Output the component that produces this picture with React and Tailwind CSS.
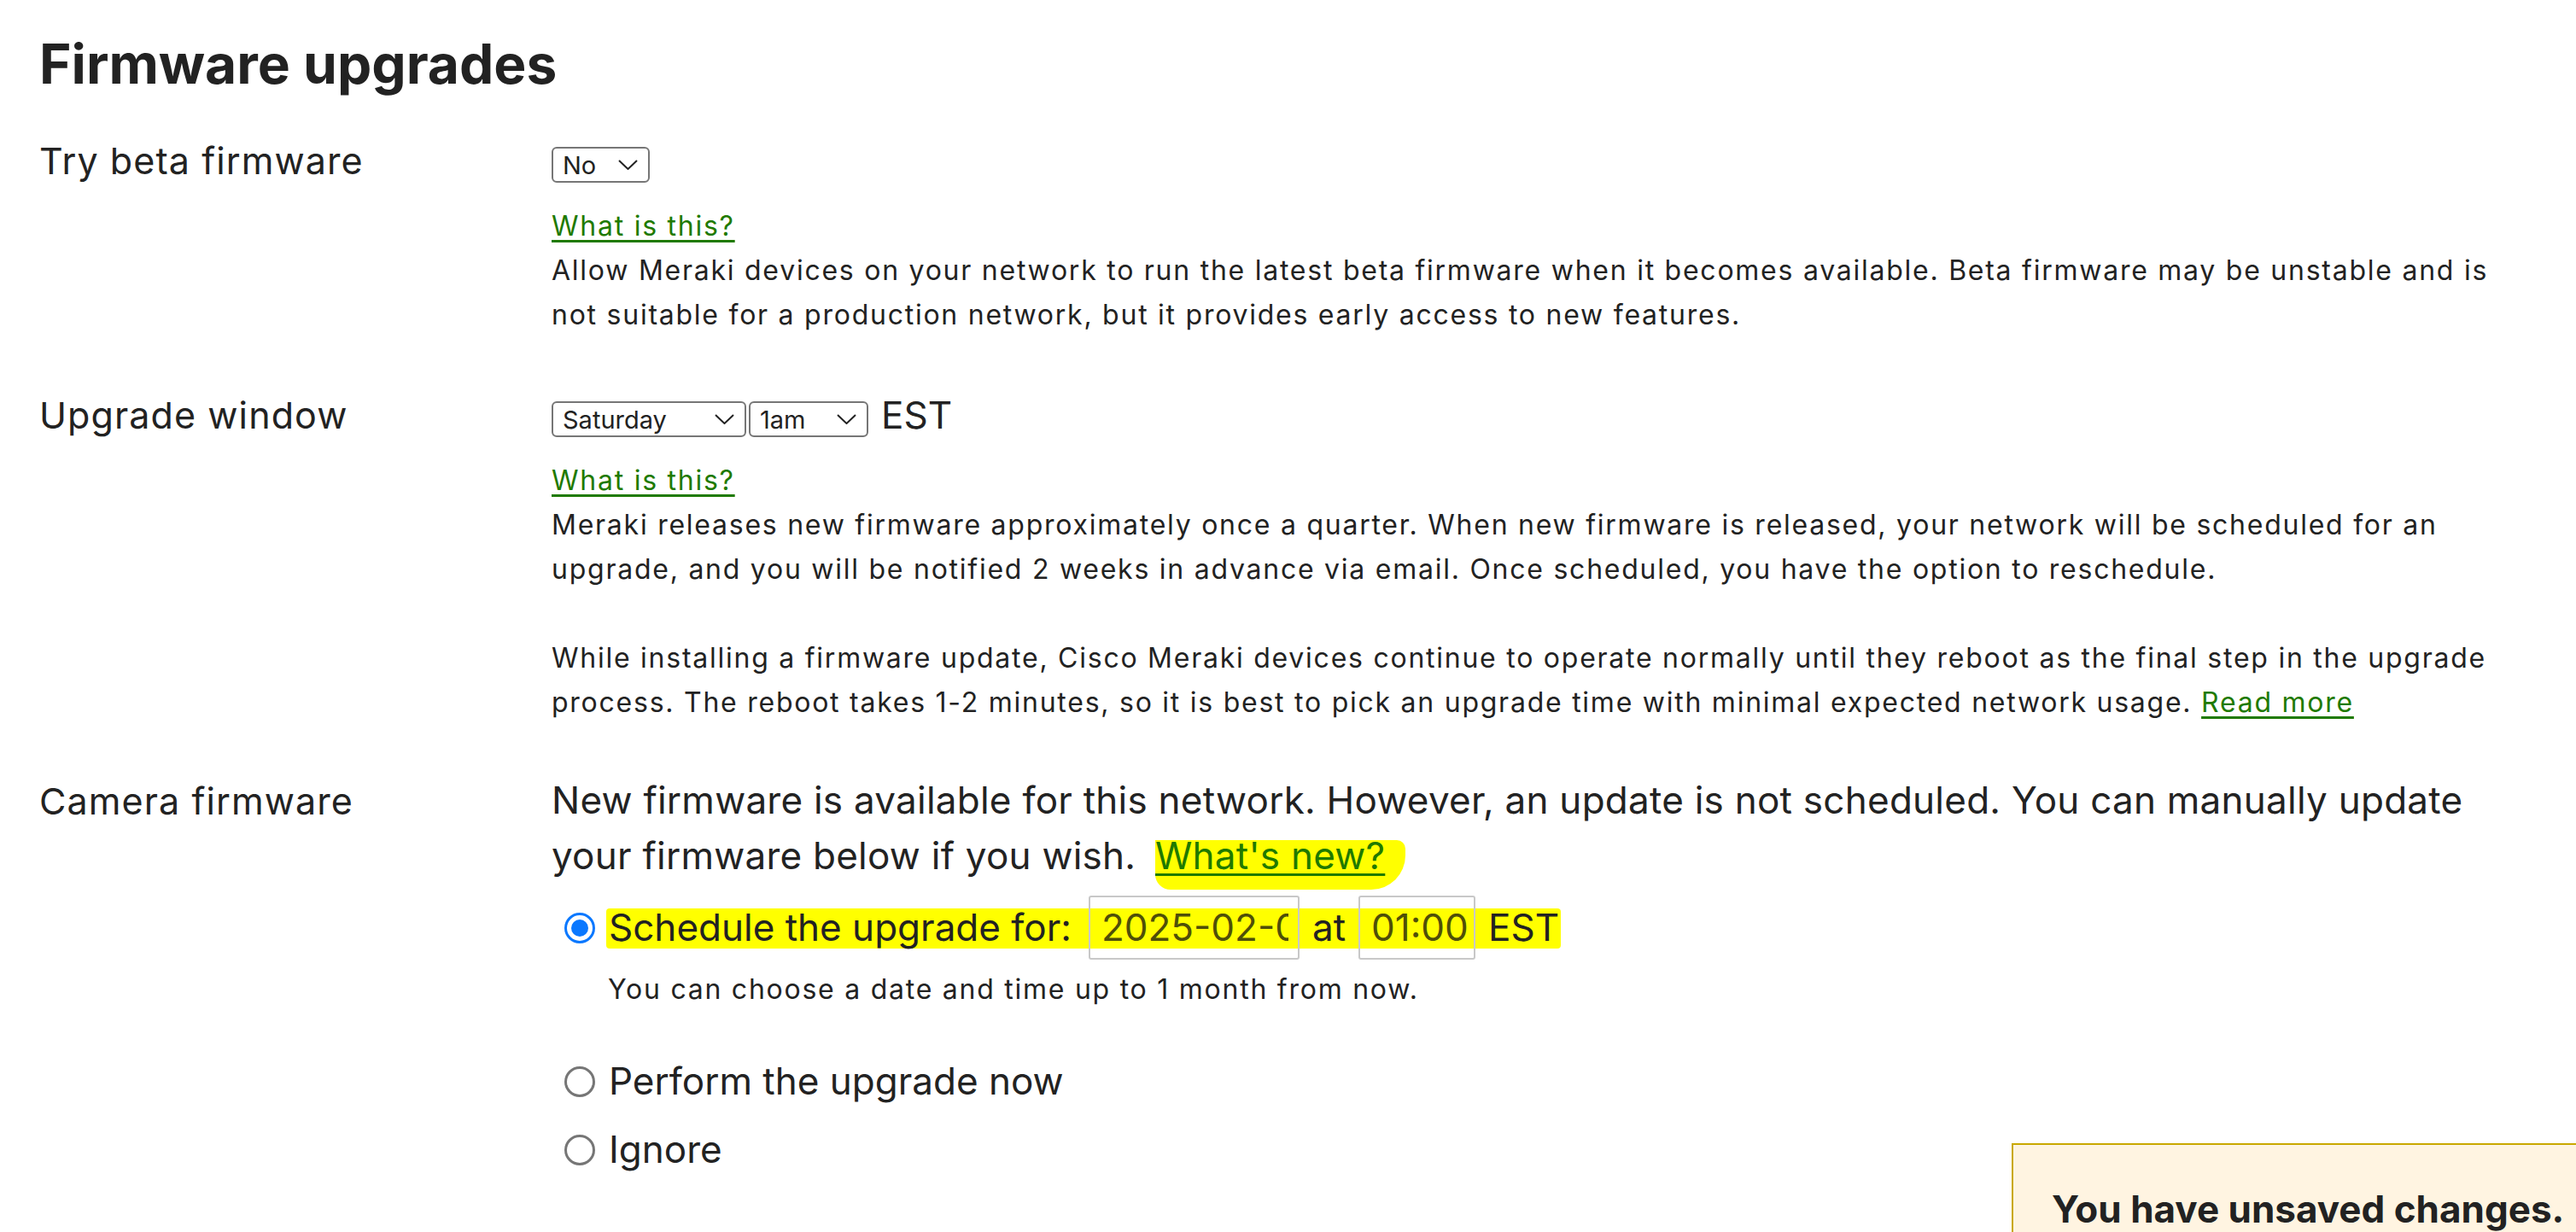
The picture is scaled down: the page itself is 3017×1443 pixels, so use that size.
const LINK =
  "text-[#1f7a00] underline decoration-[3px] underline-offset-[5px] decoration-[#1f7a00]";

function Chevron() {
  return (
    <svg width="23" height="12" viewBox="0 0 23 12" fill="none">
      <path d="M1 1 L11.5 11 L22 1" stroke="#222" strokeWidth="2" />
    </svg>
  );
}

function Select({ value, width }) {
  return (
    <div
      className={`flex h-[42px] items-center justify-between rounded-[6px] border-2 border-[#767676] bg-white pl-[11px] pr-[12px] text-[29px] leading-none ${width}`}
    >
      <span>{value}</span>
      <Chevron />
    </div>
  );
}

function Radio({ checked }) {
  if (checked) {
    return (
      <span className="flex h-[36px] w-[36px] shrink-0 items-center justify-center rounded-full border-[3px] border-[#0a78ff] bg-white">
        <span className="h-[20px] w-[20px] rounded-full bg-[#0a78ff]" />
      </span>
    );
  }
  return <span className="h-[36px] w-[36px] shrink-0 rounded-full border-[3px] border-[#767676] bg-white" />;
}

function Row({ label, labelClass = "", className = "", children }) {
  return (
    <div className={`grid grid-cols-[600px_1fr] ${className}`}>
      <div className={`text-[43px] leading-[32px] tracking-[1.1px] ${labelClass}`}>{label}</div>
      <div>{children}</div>
    </div>
  );
}

export default function App() {
  return (
    <div className="relative h-[1443px] overflow-hidden bg-white pl-[46px] pr-[67px] pt-[36px] font-['Inter',sans-serif] text-[#222]">
      <h1 className="text-[64px] font-bold leading-[78px]">Firmware upgrades</h1>

      {/* Try beta firmware */}
      <Row label="Try beta firmware" className="mt-[58px]">
        <Select value="No" width="w-[115px]" />
        <div className="mt-[25px] text-[32px] leading-[52px] tracking-[1.75px]">
          <a className={`block w-fit ${LINK}`}>What is this?</a>
          <p>
            Allow Meraki devices on your network to run the latest beta firmware when it becomes
            available. Beta firmware may be unstable and is not suitable for a production network,
            but it provides early access to new features.
          </p>
        </div>
      </Row>

      {/* Upgrade window */}
      <Row label="Upgrade window" className="mt-[75px]">
        <div className="flex items-start gap-[3px]">
          <Select value="Saturday" width="w-[228px]" />
          <Select value="1am" width="w-[140px]" />
          <span className="ml-[12px] text-[44px] leading-[32px]">EST</span>
        </div>
        <div className="mt-[25px] text-[32px] leading-[52px] tracking-[1.75px]">
          <a className={`block w-fit ${LINK}`}>What is this?</a>
          <p>
            Meraki releases new firmware approximately once a quarter. When new firmware is
            released, your network will be scheduled for an upgrade, and you will be notified 2
            weeks in advance via email. Once scheduled, you have the option to reschedule.
          </p>
          <p className="mt-[52px]">
            While installing a firmware update, Cisco Meraki devices continue to operate normally
            until they reboot as the final step in the upgrade process. The reboot takes 1-2
            minutes, so it is best to pick an upgrade time with minimal expected network usage.{" "}
            <a className={LINK}>Read more</a>
          </p>
        </div>
      </Row>

      {/* Camera firmware */}
      <Row label="Camera firmware" labelClass="mt-[17px]" className="mt-[56px]">
        <p className="text-[44px] leading-[65px] tracking-[0.25px]">
          New firmware is available for this network. However, an update is not scheduled. You can
          manually update your firmware below if you wish.{" "}
          <span className="relative isolate ml-[10px] inline-block">
            <span className="absolute -right-[24px] -bottom-[7px] left-0 top-[14px] -z-10 rounded-tr-[10px] rounded-br-[40px] rounded-bl-[18px] bg-[#ffff00]" />
            <a className={LINK}>What's new?</a>
          </span>
        </p>

        <div className="mt-[14px] flex h-[75px] items-center text-[44px] leading-[53px]">
          <span className="ml-[15px]">
            <Radio checked />
          </span>
          <div className="relative isolate ml-[16px] flex h-full items-center gap-[15px]">
            <span className="absolute -left-[3px] -right-[2px] top-[15px] bottom-[13px] -z-10 rounded-[4px] bg-[#ffff00]" />
            <span>Schedule the upgrade for:</span>
            <span className="ml-[5px] flex h-[75px] w-[247px] items-center rounded-[3px] border-2 border-[#c8c8c8] pl-[13px] text-[#4f4f08]">
              <span className="w-[219px] overflow-hidden whitespace-nowrap">2025-02-04</span>
            </span>
            <span>at</span>
            <span className="flex h-[75px] w-[137px] items-center rounded-[3px] border-2 border-[#c8c8c8] pl-[13px] text-[#4f4f08]">
              01:00
            </span>
            <span>EST</span>
          </div>
        </div>

        <p className="ml-[66px] mt-[9px] text-[32px] leading-[52px] tracking-[1.75px]">
          You can choose a date and time up to 1 month from now.
        </p>

        <div className="mt-[55px] flex h-[53px] items-center gap-[16px] pl-[15px] text-[44px] leading-[53px]">
          <Radio />
          <span>Perform the upgrade now</span>
        </div>
        <div className="mt-[27px] flex h-[53px] items-center gap-[16px] pl-[15px] text-[44px] leading-[53px]">
          <Radio />
          <span>Ignore</span>
        </div>
      </Row>

      {/* Unsaved changes bar */}
      <div className="absolute left-[2356px] top-[1339px] h-[200px] w-[900px] border-2 border-[#c9a800] bg-[#fff4e1] pl-[45px] pt-[49px] text-[44px] font-bold leading-[53px]">
        You have unsaved changes.
      </div>
    </div>
  );
}
